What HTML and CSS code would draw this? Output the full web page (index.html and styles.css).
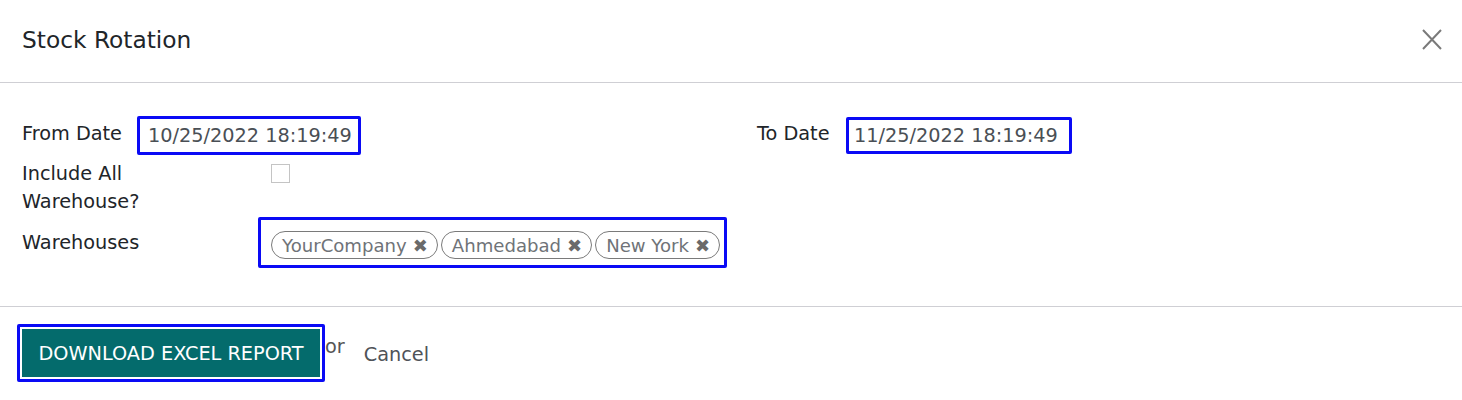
FILE: index.html
```html
<!DOCTYPE html>
<html>
<head>
<meta charset="utf-8">
<link rel="stylesheet" href="styles.css">
</head>
<body>
<div class="modal">
  <header class="modal-header">
    <h4 class="modal-title">Stock Rotation</h4>
    <button class="close" aria-label="Close">
      <svg width="20" height="21" viewBox="0 0 20 21"><path d="M1 1 L19 20 M19 1 L1 20" stroke="#7a7a7a" stroke-width="2" fill="none"/></svg>
    </button>
  </header>
  <main class="modal-body">
    <div class="cols">
      <div class="col-left">
        <div class="row row-from">
          <label class="lbl lbl-from">From Date</label>
          <div class="hl input-from">10/25/2022 18:19:49</div>
        </div>
        <div class="row row-check">
          <label class="lbl lbl-wide">Include All<br>Warehouse?</label>
          <div class="check-cell"><span class="checkbox"></span></div>
        </div>
        <div class="row row-wh">
          <label class="lbl lbl-wide lbl-wh">Warehouses</label>
          <div class="hl tagbox">
            <span class="tag">YourCompany<span class="x">✖</span></span>
            <span class="tag">Ahmedabad<span class="x">✖</span></span>
            <span class="tag">New York<span class="x">✖</span></span>
          </div>
        </div>
      </div>
      <div class="col-right">
        <div class="row row-to">
          <label class="lbl lbl-to">To Date</label>
          <div class="hl input-to">11/25/2022 18:19:49</div>
        </div>
      </div>
    </div>
  </main>
  <footer class="modal-footer">
    <div class="btn-hl"><button class="btn-primary">DOWNLOAD EXCEL REPORT</button></div>
    <span class="or">or</span>
    <a class="cancel">Cancel</a>
  </footer>
</div>
</body>
</html>
```

FILE: styles.css
```css
* { box-sizing: border-box; }
html, body { margin: 0; padding: 0; background: #fff; }
body {
  font-family: "DejaVu Sans", "Liberation Sans", sans-serif;
  color: #212529;
  font-size: 19.3px;
}
.modal { width: 1462px; }
.modal-header {
  height: 83px;
  border-bottom: 1px solid #cfcfd4;
  display: flex;
  align-items: flex-start;
  justify-content: space-between;
  padding: 23px 20px 0 22px;
}
.modal-title {
  margin: 0;
  font-size: 23.3px;
  font-weight: normal;
  line-height: 33px;
  color: #212529;
}
.close {
  border: 0;
  background: none;
  padding: 0;
  margin-top: 6px;
  width: 20px;
  height: 21px;
  display: flex;
}
.modal-body {
  padding: 33px 22px 0 22px;
  height: 224px;
  border-bottom: 1px solid #cfcfd4;
}
.cols { display: flex; }
.col-left { width: 735px; }
.col-right { padding-top: 1px; }
.row { display: flex; align-items: flex-start; }
.lbl { line-height: 28px; }
.lbl-from { width: 115px; padding-top: 4px; }
.lbl-to { width: 89px; padding-top: 3px; }
.hl {
  border: 3px solid #0a0af5;
  border-radius: 2px;
}
.input-from, .input-to {
  color: #4a4f55;
  line-height: 33px;
  white-space: nowrap;
}
.input-from { width: 224px; padding: 0 8px; }
.input-to { width: 226px; line-height: 31px; padding: 0 5px; }
.row-check { margin-top: 5px; }
.lbl-wide { width: 236px; }
.check-cell { padding: 4px 0 0 13px; }
.checkbox {
  display: block;
  width: 19px;
  height: 19px;
  border: 1px solid #c4c4c4;
  background: #fff;
}
.row-wh { margin-top: 1px; }
.lbl-wh { padding-top: 12px; }
.tagbox {
  width: 469px;
  height: 51px;
  display: flex;
  align-items: flex-start;
  gap: 3px;
  padding: 11px 10px 0 10px;
}
.tag {
  display: inline-flex;
  align-items: center;
  height: 28px;
  border: 1px solid #7a7a7a;
  border-radius: 14px;
  padding: 0 9px 0 10px;
  font-size: 18.1px;
  color: #6f7378;
  white-space: nowrap;
}
.tag .x {
  margin-left: 6px;
  font-size: 18px;
  color: #6a6a6a;
}
.modal-footer {
  display: flex;
  align-items: flex-start;
  padding: 17px 17px 0 17px;
}
.btn-hl {
  border: 3px solid #0a0af5;
  padding: 2px;
  border-radius: 2px;
}
.btn-primary {
  display: block;
  width: 298px;
  height: 48px;
  border: 0;
  background: #046b6c;
  color: #fff;
  font-family: "DejaVu Sans", "Liberation Sans", sans-serif;
  font-size: 19.3px;
  padding: 0;
}
.or {
  margin-top: 8px;
  color: #555;
  line-height: 29px;
}
.cancel {
  margin-left: 19px;
  margin-top: 16px;
  color: #4f5358;
  line-height: 29px;
}
```
